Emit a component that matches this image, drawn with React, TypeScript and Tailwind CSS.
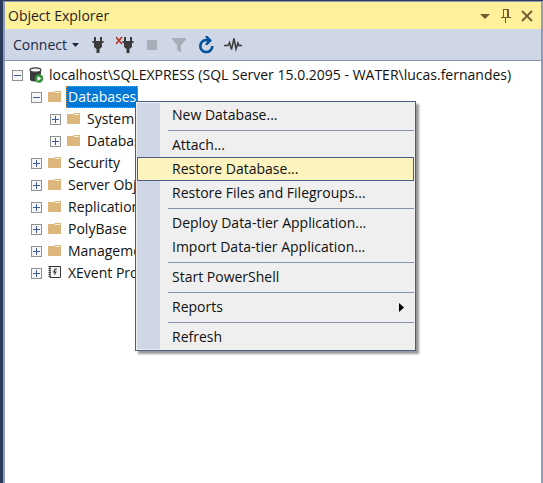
import type { ReactNode } from "react";

type NodeData = { label: string; level: number; open?: boolean; icon: "server" | "folder" | "xevent"; selected?: boolean };

const nodes: NodeData[] = [
  { label: "localhost\\SQLEXPRESS (SQL Server 15.0.2095 - WATER\\lucas.fernandes)", level: 0, open: true, icon: "server" },
  { label: "Databases", level: 1, open: true, icon: "folder", selected: true },
  { label: "System Databases", level: 2, icon: "folder" },
  { label: "Database Snapshots", level: 2, icon: "folder" },
  { label: "Security", level: 1, icon: "folder" },
  { label: "Server Objects", level: 1, icon: "folder" },
  { label: "Replication", level: 1, icon: "folder" },
  { label: "PolyBase", level: 1, icon: "folder" },
  { label: "Management", level: 1, icon: "folder" },
  { label: "XEvent Profiler", level: 1, icon: "xevent" },
];

const indents = ["pl-[7px]", "pl-[26px]", "pl-[45px]"];

const menuGroups: string[][] = [
  ["New Database..."],
  ["Attach...", "Restore Database...", "Restore Files and Filegroups..."],
  ["Deploy Data-tier Application...", "Import Data-tier Application..."],
  ["Start PowerShell"],
  ["Reports"],
  ["Refresh"],
];

function NodeIcon({ kind }: { kind: NodeData["icon"] }) {
  if (kind === "server") {
    return (
      <svg width="16" height="16" viewBox="0 0 16 16" className="shrink-0" aria-hidden="true">
        <path d="M2 3v9.500c0 1.200 2 2 4.500 2H8a5 5 0 0 1 5-7V3z" fill="#3a3a3a" />
        <ellipse cx="7.500" cy="3" rx="5.500" ry="2.200" fill="#f4f4f4" stroke="#3a3a3a" strokeWidth="1.200" />
        <circle cx="11" cy="11.500" r="4.200" fill="#2f9136" />
        <path d="M9.500 9v5l4-2.500z" fill="#fff" />
      </svg>
    );
  }
  if (kind === "xevent") {
    return (
      <svg width="16" height="16" viewBox="0 0 16 16" className="shrink-0" aria-hidden="true">
        <path d="M3 1.500h10.500v11H3z" fill="#f3f3f3" stroke="#333" />
        <path d="M2.500 1v12" stroke="#333" strokeWidth="2" strokeDasharray="1 1" />
        <path d="M10 4H8.200L6.800 7h2L7.500 9.500" fill="none" stroke="#333" strokeWidth="1.200" />
      </svg>
    );
  }
  return (
    <svg width="16" height="16" viewBox="0 0 16 16" className="shrink-0" aria-hidden="true">
      <path d="M1 3h6l1-1h6v11H1z" fill="#dcb67a" />
      <path d="M8 3.500h5" stroke="#f8efdf" />
    </svg>
  );
}

function Expander({ open, label }: { open?: boolean; label: string }) {
  return (
    <button type="button" aria-label={(open ? "Collapse " : "Expand ") + label} className="flex size-[11px] shrink-0">
      <svg width="11" height="11" viewBox="0 0 11 11" shapeRendering="crispEdges" aria-hidden="true">
        <path d="M.5 .5h10v10H.5z" fill="#f7f7f7" stroke="#919191" />
        <path d={open ? "M2 5.500h7" : "M2 5.500h7M5.500 2v7"} stroke="#3f5a9c" />
      </svg>
    </button>
  );
}

function ToolButton({ label, children }: { label: string; children: ReactNode }) {
  return (
    <button type="button" aria-label={label} className="flex size-[18px] items-center justify-center">
      {children}
    </button>
  );
}

function Plug() {
  return <path d="M5 1h2v4h4V1h2v4h1.500v2H13v4l-2.500 2v4h-3v-4L5 11V7H3.500V5H5z" fill="#3b3b3b" />;
}

function TitleBar() {
  return (
    <header className="flex h-[27px] items-center bg-[#fff09c] pl-[3px] pr-1.5 text-[#1e1e1e]">
      <h1 className="flex-1 text-[14px] leading-5">Object Explorer</h1>
      <div className="flex items-center gap-[5px] text-[#6f5c32]">
        <button type="button" aria-label="Window position" className="flex">
          <svg width="16" height="16" viewBox="0 0 16 16"><path d="M3 6h10l-5 5z" fill="currentColor" /></svg>
        </button>
        <button type="button" aria-label="Auto hide" className="flex">
          <svg width="16" height="16" viewBox="0 0 16 16" fill="none" stroke="currentColor" shapeRendering="crispEdges">
            <path d="M5.500 9V1.500h5V9M3 9.500h10M7.500 10v5M9.500 2v7" />
          </svg>
        </button>
        <button type="button" aria-label="Close" className="flex">
          <svg width="16" height="16" viewBox="0 0 16 16"><path d="M3 3l10 10M13 3L3 13" stroke="currentColor" strokeWidth="1.800" /></svg>
        </button>
      </div>
    </header>
  );
}

function Toolbar() {
  return (
    <div role="toolbar" className="flex h-8 items-center gap-[9px] border-b border-[#8a91a5] bg-[#cfd6e5] pl-2">
      <button type="button" className="flex w-[67px] items-center justify-between text-[14px] leading-5 text-[#1b293e]">
        Connect
        <svg width="8" height="4" viewBox="0 0 8 4"><path d="M0 0h7L3.500 4z" fill="currentColor" /></svg>
      </button>
      <ToolButton label="Connect Object Explorer">
        <svg width="18" height="18" viewBox="0 0 18 18"><Plug /></svg>
      </ToolButton>
      <ToolButton label="Disconnect">
        <svg width="18" height="18" viewBox="0 0 18 18">
          <g transform="translate(3 0)"><Plug /></g>
          <path d="M0 1l6 7M6 1L0 8" stroke="#b42d18" strokeWidth="1.500" />
        </svg>
      </ToolButton>
      <ToolButton label="Stop">
        <svg width="18" height="18" viewBox="0 0 18 18"><path d="M4 4h10v10H4z" fill="#a9adb8" /></svg>
      </ToolButton>
      <ToolButton label="Filter">
        <svg width="18" height="18" viewBox="0 0 18 18"><path d="M2 2h14v1.500L11 9v7.500L7 14V9L2 3.500z" fill="#a9adb8" /></svg>
      </ToolButton>
      <ToolButton label="Refresh">
        <svg width="18" height="18" viewBox="0 0 18 18">
          <path d="M11 4.300A6 6 0 1 0 15.300 10" fill="none" stroke="#00539c" strokeWidth="2.600" />
          <path d="M8 0h2.500L15 4.500 10.500 9H8l2.500-4.500z" fill="#00539c" />
        </svg>
      </ToolButton>
      <ToolButton label="Activity Monitor">
        <svg width="18" height="18" viewBox="0 0 18 18">
          <path d="M0 9.500h4l1.500-3 2 7 2.500-11 2 10.500L14 7l1 2.500h3" fill="none" stroke="#3b3b3b" strokeWidth="1.500" />
        </svg>
      </ToolButton>
    </div>
  );
}

function ContextMenu() {
  return (
    <div
      role="menu"
      className="absolute left-[130px] top-10 w-[281px] border border-[#4a5d87] bg-[#efefef] p-px shadow-[3px_3px_2px_rgba(0,0,0,0.4)]"
    >
      <div className="bg-linear-to-r from-[#cfd6e5] from-[23px] to-transparent to-[23px]">
        {menuGroups.map((group, index) => (
          <div key={group[0]}>
            {index > 0 && (
              <div role="separator" className="ml-[31px] flex h-1.5 items-center">
                <div className="h-px w-full bg-[#8492b0]" />
              </div>
            )}
            {group.map((item) => (
              <button
                key={item}
                type="button"
                role="menuitem"
                className={
                  "flex h-6 w-full items-center justify-between border pl-[34px] pr-[9px] text-left text-[14px] leading-5 text-[#111] " +
                  (item === "Restore Database..." ? "border-[#4a5d87] bg-[#fdf3bf]" : "border-transparent")
                }
              >
                {item}
                {item === "Reports" && (
                  <svg width="5" height="9" viewBox="0 0 5 9" aria-hidden="true"><path d="M0 0l5 4.500L0 9z" fill="#000" /></svg>
                )}
              </button>
            ))}
          </div>
        ))}
      </div>
    </div>
  );
}

export default function App() {
  return (
    <div className="flex min-h-screen bg-[#2b3a5b] pl-[3px] pt-px font-['Open_Sans','Noto_Sans',sans-serif]">
      <main className="flex min-w-0 flex-1 flex-col border-x-2 border-t border-[#8e9bbc]">
        <TitleBar />
        <Toolbar />
        <div className="relative flex-1 bg-white pt-[3px]">
          <ul role="tree" className="text-[14px] leading-5 text-[#111]">
            {nodes.map((node) => (
              <li
                key={node.label}
                role="treeitem"
                aria-level={node.level + 1}
                aria-selected={!!node.selected}
                aria-expanded={!!node.open}
                className={"flex h-[22px] items-center whitespace-nowrap " + indents[node.level]}
              >
                <Expander open={node.open} label={node.label} />
                <span className="ml-[5px] flex"><NodeIcon kind={node.icon} /></span>
                <span
                  className={
                    "ml-[3px] border border-dotted px-px " +
                    (node.selected ? "border-[#e08a2c] bg-[#0078d7] text-white" : "border-transparent")
                  }
                >
                  {node.label}
                </span>
              </li>
            ))}
          </ul>
          <ContextMenu />
        </div>
      </main>
    </div>
  );
}
